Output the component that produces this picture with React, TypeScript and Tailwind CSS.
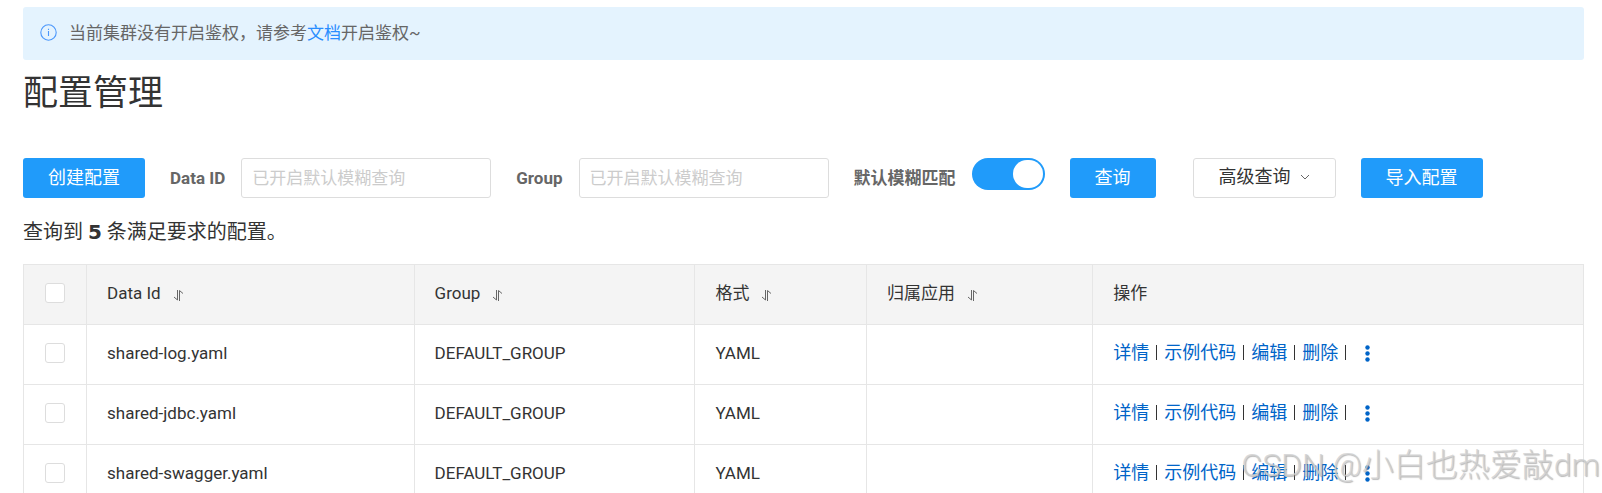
import { useState, type ReactNode } from "react";

const rows = [
  { dataId: "shared-log.yaml", group: "DEFAULT_GROUP", format: "YAML", app: "" },
  { dataId: "shared-jdbc.yaml", group: "DEFAULT_GROUP", format: "YAML", app: "" },
  { dataId: "shared-swagger.yaml", group: "DEFAULT_GROUP", format: "YAML", app: "" },
];

const actions = ["详情", "示例代码", "编辑", "删除"];

function InfoIcon() {
  return (
    <svg width="17" height="17" viewBox="0 0 17 17" fill="none" stroke="#4b97fb" aria-hidden="true">
      <circle cx="8.5" cy="8.5" r="7.7" strokeWidth="1.1" />
      <path d="M8.5 7v5M8.5 4.8v1.2" strokeWidth="1.1" />
    </svg>
  );
}

function SortIcon() {
  return (
    <svg width="11" height="12" viewBox="0 0 11 12" fill="none" stroke="#666" strokeWidth="1" aria-hidden="true">
      <path d="M4.5 1v10L1 8" />
      <path d="M6.5 12V1.5L10 4.5" />
    </svg>
  );
}

function MoreIcon() {
  return (
    <svg width="5" height="17" viewBox="0 0 5 17" fill="#0064c8" aria-hidden="true">
      <circle cx="2.5" cy="2.5" r="2.2" />
      <circle cx="2.5" cy="8.5" r="2.2" />
      <circle cx="2.5" cy="14.5" r="2.2" />
    </svg>
  );
}

function PrimaryButton({ children }: { children: ReactNode }) {
  return (
    <button type="button" className="h-10 shrink-0 rounded-[3px] bg-[#209bfa] px-[25px] text-[18px] text-white">
      {children}
    </button>
  );
}

function SearchField({ id, label }: { id: string; label: string }) {
  return (
    <div className="flex items-center gap-4">
      <label htmlFor={id} className="font-bold text-[#666]">
        {label}
      </label>
      <input
        id={id}
        type="text"
        placeholder="已开启默认模糊查询"
        className="h-10 w-[250px] rounded-[3px] border border-[#ddd] px-[10px] outline-none placeholder:text-[#ccc]"
      />
    </div>
  );
}

function Checkbox({ label }: { label: string }) {
  return (
    <input
      type="checkbox"
      aria-label={label}
      className="mx-auto block size-5 appearance-none rounded-[3px] border border-[#ddd] bg-white checked:bg-[#209bfa]"
    />
  );
}

function HeaderCell({ title, sortable = true }: { title: string; sortable?: boolean }) {
  return (
    <th className="border border-[#e6e6e6] px-5 pb-1 text-left font-normal">
      <div className="flex items-center gap-3">
        {title}
        {sortable && (
          <button type="button" aria-label={title} className="pt-1">
            <SortIcon />
          </button>
        )}
      </div>
    </th>
  );
}

function Cell({ children }: { children: ReactNode }) {
  return <td className="border border-[#e6e6e6] px-5 pb-1">{children}</td>;
}

export default function App() {
  const [fuzzy, setFuzzy] = useState(true);

  return (
    <main className="relative h-screen overflow-hidden bg-white pt-[7px] pr-[18px] pl-[23px] font-[Roboto,'Noto_Sans_CJK_SC',sans-serif] text-[17px] leading-6 text-[#333]">
      <div className="flex h-[53px] items-center gap-3 rounded-[3px] bg-[#e4f3fe] px-[17px] pb-0.5 text-[#666]">
        <InfoIcon />
        <p>
          {"当前集群没有开启鉴权\uff0c请参考"}
          <a href="#" className="text-[#298dff]">
            文档
          </a>
          开启鉴权~
        </p>
      </div>

      <h1 className="mt-[10px] text-[35px] leading-[48px]">配置管理</h1>

      <form className="mt-10 flex items-center gap-[25px]">
        <PrimaryButton>创建配置</PrimaryButton>
        <SearchField id="data-id" label="Data ID" />
        <SearchField id="group" label="Group" />
        <div className="flex items-center gap-4">
          <span id="fuzzy-label" className="font-bold text-[#666]">
            默认模糊匹配
          </span>
          <button
            type="button"
            role="switch"
            aria-checked={fuzzy}
            aria-labelledby="fuzzy-label"
            onClick={() => setFuzzy(!fuzzy)}
            className={`mb-2 flex h-8 w-[73px] items-center rounded-full px-0.5 ${fuzzy ? "justify-end bg-[#209bfa]" : "justify-start bg-[#ccc]"}`}
          >
            <span className="h-7 w-[30px] rounded-full bg-white" />
          </button>
        </div>
        <PrimaryButton>查询</PrimaryButton>
        <button
          type="button"
          className="ml-3 flex h-10 shrink-0 items-center gap-[9px] rounded-[3px] border border-[#ddd] px-[25px] pb-0.5 text-[18px]"
        >
          高级查询
          <svg width="10" height="7" viewBox="0 0 10 7" fill="none" stroke="#666" aria-hidden="true">
            <path d="M1 1l4 4 4-4" />
          </svg>
        </button>
        <PrimaryButton>导入配置</PrimaryButton>
      </form>

      <p className="mt-[21px] text-[20px] leading-[26px]">
        查询到 <strong className="font-['DejaVu_Sans'] font-bold">5</strong> 条满足要求的配置。
      </p>

      <table className="mt-[19px] w-full table-fixed border-collapse">
        <colgroup>
          <col className="w-[63px]" />
          <col className="w-[21%]" />
          <col className="w-[18%]" />
          <col className="w-[11%]" />
          <col className="w-[14.5%]" />
          <col />
        </colgroup>
        <thead>
          <tr className="h-[60px] bg-[#f4f4f4]">
            <th className="border border-[#e6e6e6] pb-1">
              <Checkbox label="全选" />
            </th>
            <HeaderCell title="Data Id" />
            <HeaderCell title="Group" />
            <HeaderCell title="格式" />
            <HeaderCell title="归属应用" />
            <HeaderCell title="操作" sortable={false} />
          </tr>
        </thead>
        <tbody>
          {rows.map((row) => (
            <tr key={row.dataId} className="h-[60px]">
              <td className="border border-[#e6e6e6] pb-1">
                <Checkbox label={row.dataId} />
              </td>
              <Cell>{row.dataId}</Cell>
              <Cell>{row.group}</Cell>
              <Cell>{row.format}</Cell>
              <Cell>{row.app}</Cell>
              <Cell>
                <div className="flex items-center gap-[7px] text-[18px]">
                  {actions.map((action) => (
                    <span key={action} className="flex items-center gap-[7px]">
                      <a href="#" className="text-[#0064c8]">
                        {action}
                      </a>
                      <span className="h-[15px] w-px bg-[#333]" />
                    </span>
                  ))}
                  <button type="button" aria-label="更多" className="ml-3 pt-0.5">
                    <MoreIcon />
                  </button>
                </div>
              </Cell>
            </tr>
          ))}
        </tbody>
      </table>

      <div className="pointer-events-none absolute right-0.5 bottom-2 text-[32px] leading-10 font-light whitespace-nowrap text-[#d0d0d0]/80 [text-shadow:1px_1px_1px_#8889]">
        CSDN @小白也热爱敲dm
      </div>
    </main>
  );
}
